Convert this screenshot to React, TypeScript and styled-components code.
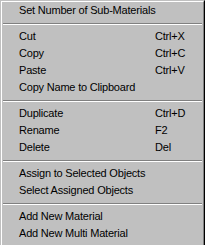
import styled, { createGlobalStyle } from "styled-components";

const GlobalStyle = createGlobalStyle`
  html, body {
    margin: 0;
    padding: 0;
    background: #c0c0c0;
  }
`;

// the menu is cut off at the bottom, so no bottom edge is drawn
const Frame = styled.div`
  width: 205px;
  height: 245px;
  box-sizing: border-box;
  border-style: solid;
  border-width: 1px 1px 0 1px;
  border-color: #c0c0c0 #000000 #000000 #c0c0c0;
  background: #c0c0c0;
  overflow: hidden;
`;

const Inner = styled.div`
  height: 100%;
  box-sizing: border-box;
  border-style: solid;
  border-width: 1px 1px 0 1px;
  border-color: #ffffff #808080 #808080 #ffffff;
  display: flex;
  flex-direction: column;
`;

const Item = styled.div`
  display: grid;
  grid-template-columns: 136px 1fr;
  height: 17px;
  line-height: 17px;
  padding-left: 17px;
  font-family: "Liberation Sans", Arial, sans-serif;
  font-size: 11px;
  letter-spacing: -0.2px;
  color: #000000;
  white-space: nowrap;
`;

const Label = styled.span``;

const Shortcut = styled.span``;

const Separator = styled.div`
  height: 9px;
  flex-shrink: 0;
  display: flex;
  flex-direction: column;
  padding: 4px 1px 0 1px;
  box-sizing: border-box;

  &::before {
    content: "";
    display: block;
    height: 1px;
    background: #808080;
  }
  &::after {
    content: "";
    display: block;
    height: 1px;
    background: #ffffff;
  }
`;

type Entry = { label: string; shortcut?: string } | "sep";

const entries: Entry[] = [
  { label: "Set Number of Sub-Materials" },
  "sep",
  { label: "Cut", shortcut: "Ctrl+X" },
  { label: "Copy", shortcut: "Ctrl+C" },
  { label: "Paste", shortcut: "Ctrl+V" },
  { label: "Copy Name to Clipboard" },
  "sep",
  { label: "Duplicate", shortcut: "Ctrl+D" },
  { label: "Rename", shortcut: "F2" },
  { label: "Delete", shortcut: "Del" },
  "sep",
  { label: "Assign to Selected Objects" },
  { label: "Select Assigned Objects" },
  "sep",
  { label: "Add New Material" },
  { label: "Add New Multi Material" },
];

const App = () => {
  return (
    <>
      <GlobalStyle />
      <Frame>
        <Inner>
          {entries.map((e, i) =>
            e === "sep" ? (
              <Separator key={i} />
            ) : (
              <Item key={i}>
                <Label>{e.label}</Label>
                <Shortcut>{e.shortcut}</Shortcut>
              </Item>
            )
          )}
        </Inner>
      </Frame>
    </>
  );
};

export default App;
